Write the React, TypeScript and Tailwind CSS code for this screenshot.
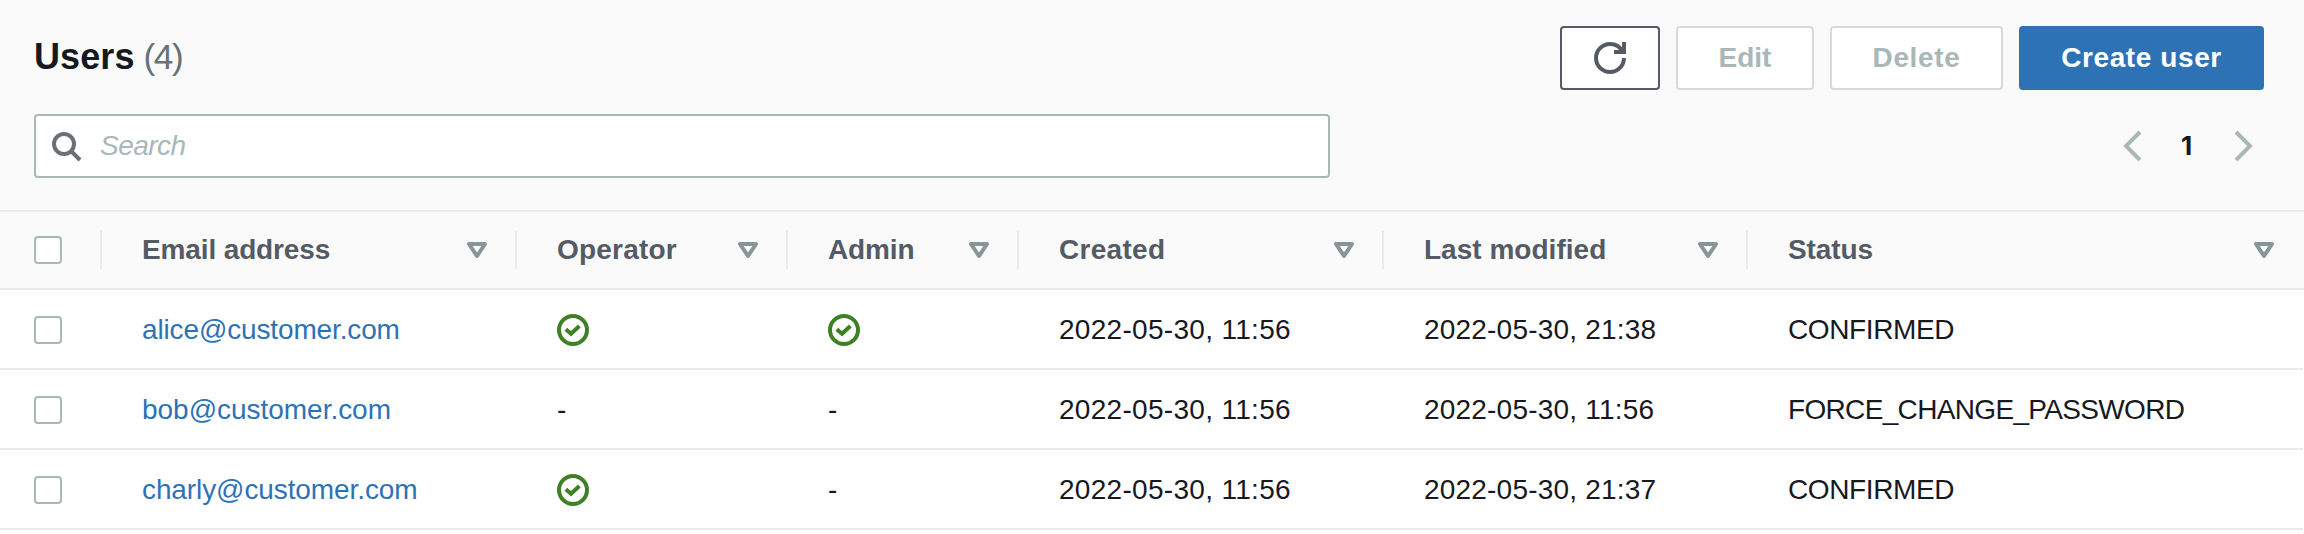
import type { ReactNode } from 'react';
import clsx from 'clsx';

type User = {
  email: string;
  emailClass: string;
  operator: boolean;
  admin: boolean;
  created: string;
  modified: string;
  status: string;
  statusClass: string;
};

const COLUMNS = 'grid grid-cols-[100px_415px_271px_231px_365px_364px_1fr]';

const HEADERS = [
  { label: 'Email address', className: 'tracking-[-0.13px]' },
  { label: 'Operator', className: 'tracking-[0.2px]' },
  { label: 'Admin', className: 'tracking-[-0.15px]' },
  { label: 'Created', className: 'tracking-[0.3px]' },
  { label: 'Last modified', className: 'tracking-[0.02px]' },
  { label: 'Status', className: 'tracking-[-0.1px]' },
];

const USERS: User[] = [
  {
    email: 'alice@customer.com',
    emailClass: 'tracking-[-0.14px]',
    operator: true,
    admin: true,
    created: '2022-05-30, 11:56',
    modified: '2022-05-30, 21:38',
    status: 'CONFIRMED',
    statusClass: 'tracking-[-0.38px]',
  },
  {
    email: 'bob@customer.com',
    emailClass: 'tracking-[-0.03px]',
    operator: false,
    admin: false,
    created: '2022-05-30, 11:56',
    modified: '2022-05-30, 11:56',
    status: 'FORCE_CHANGE_PASSWORD',
    statusClass: 'tracking-[-0.66px]',
  },
  {
    email: 'charly@customer.com',
    emailClass: 'tracking-[-0.1px]',
    operator: true,
    admin: false,
    created: '2022-05-30, 11:56',
    modified: '2022-05-30, 21:37',
    status: 'CONFIRMED',
    statusClass: 'tracking-[-0.38px]',
  },
];

function Icon({ className, children }: { className?: string; children: ReactNode }) {
  return (
    <svg
      viewBox="0 0 16 16"
      fill="none"
      stroke="currentColor"
      strokeWidth="2"
      className={clsx('size-8 shrink-0 overflow-visible', className)}
    >
      {children}
    </svg>
  );
}

function Checkbox() {
  return (
    <div className="flex items-center pl-[34px]">
      <div role="checkbox" aria-checked="false" className="size-7 rounded-[4px] border-2 border-[#aab7b8] bg-white" />
    </div>
  );
}

function Cell({ className, children }: { className?: string; children: ReactNode }) {
  return <div className={clsx('flex items-center pl-[42px] whitespace-nowrap', className)}>{children}</div>;
}

function Flag({ on }: { on: boolean }) {
  if (!on) return <Cell>-</Cell>;
  return (
    <Cell>
      <Icon className="text-[#3e8124]">
        <circle cx="8" cy="8" r="7" />
        <path d="M4.4 7.6 7 9.9l4.2-3.9" />
      </Icon>
    </Cell>
  );
}

export default function App() {
  return (
    <div className="h-[534px] w-[2304px] overflow-hidden bg-white font-['Liberation_Sans',Arial,sans-serif] text-[28px] leading-8 text-[#16191f]">
      <header className="flex h-[210px] flex-col gap-6 bg-[#fafafa] pt-[26px] pr-10 pl-[34px]">
        <div className="flex h-16 items-center justify-between">
          <h1 className="flex gap-[9px] pb-[2px] text-[36px] leading-10 font-bold tracking-[0.1px]">
            Users
            <span className="text-[35px] font-normal tracking-[-1.4px] text-[#687078]">(4)</span>
          </h1>
          <div className="flex gap-4 font-bold">
            <button className="flex h-16 w-[100px] items-center justify-center rounded-[4px] border-2 border-[#545b64] bg-white text-[#545b64]">
              <Icon>
                <path d="M10 5h5V0" />
                <path d="M15 8a7 7 0 1 1-7-7 6.87 6.87 0 0 1 6.3 4" />
              </Icon>
            </button>
            <button className="h-16 w-[138px] rounded-[4px] border-2 border-[#d5dbdb] bg-white text-[#aab7b8]">
              Edit
            </button>
            <button className="h-16 w-[173px] rounded-[4px] border-2 border-[#d5dbdb] bg-white tracking-[0.65px] text-[#aab7b8]">
              Delete
            </button>
            <button className="h-16 w-[245px] rounded-[4px] bg-[#2e72b6] tracking-[0.6px] text-white">
              Create user
            </button>
          </div>
        </div>
        <div className="flex h-16 items-center justify-between">
          <div className="flex h-16 w-[1296px] items-center gap-[18px] rounded-[4px] border-2 border-[#aab7b8] bg-white pl-[14px]">
            <Icon className="text-[#687078]">
              <circle cx="7" cy="7" r="5" />
              <path d="m15 15-4.5-4.5" />
            </Icon>
            <span className="tracking-[-0.55px] text-[#aab7b8] italic">Search</span>
          </div>
          <div className="flex items-center pr-1">
            <Icon className="text-[#aab7b8]">
              <path d="M12 1 5 8l7 7" />
            </Icon>
            <span className="w-20 pr-[3px] pb-px text-center font-['Inter',sans-serif] text-[26px] font-bold">1</span>
            <Icon className="text-[#aab7b8]">
              <path d="m4 1 7 7-7 7" />
            </Icon>
          </div>
        </div>
      </header>

      <div className={clsx(COLUMNS, 'h-20 border-y-2 border-[#ebebeb] bg-[#fafafa] font-bold text-[#545b64]')}>
        <Checkbox />
        {HEADERS.map(({ label, className }) => (
          <div key={label} className="flex items-center last:pr-[2px]">
            <div className="h-[38px] w-[2px] bg-[#ebebeb]" />
            <span className={clsx('flex-1 pl-10', className)}>{label}</span>
            <Icon className="mr-[22px] text-[#879596]">
              <path d="M4 5h8l-4 6z" strokeLinejoin="round" />
            </Icon>
          </div>
        ))}
      </div>

      {USERS.map((user) => (
        <div key={user.email} className={clsx(COLUMNS, 'mr-px h-20 border-b-2 border-[#ebebeb] pt-[2px]')}>
          <Checkbox />
          <Cell className={clsx('text-[#2e72b6]', user.emailClass)}>{user.email}</Cell>
          <Flag on={user.operator} />
          <Flag on={user.admin} />
          <Cell className="tracking-[0.3px]">{user.created}</Cell>
          <Cell className="tracking-[0.2px]">{user.modified}</Cell>
          <Cell className={user.statusClass}>{user.status}</Cell>
        </div>
      ))}
    </div>
  );
}
